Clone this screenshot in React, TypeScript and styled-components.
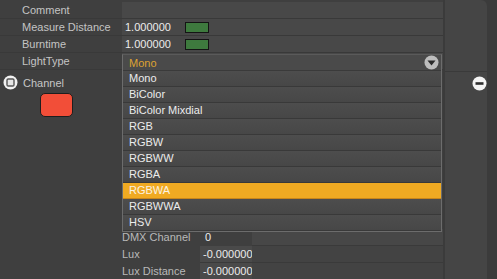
import { createGlobalStyle, styled } from 'styled-components';

const GlobalStyle = createGlobalStyle`
    html, body {
        margin: 0;
        padding: 0;
        background: #3f3f3f;
        overflow: hidden;
    }
    body {
        font-family: "Liberation Sans", Arial, sans-serif;
        font-size: 11px;
        color: #c6c6c6;
    }
`;

const Page = styled.div`
    display: flex;
    width: 497px;
    height: 279px;
    overflow: hidden;
`;

const Main = styled.div`
    position: relative;
    width: 443px;
    padding-top: 2px;
    display: flex;
    flex-direction: column;
`;

const PropRow = styled.div`
    display: grid;
    grid-template-columns: 122px 1fr;
    height: 17px;
    border-bottom: 1px solid #393939;
    box-sizing: border-box;
`;

const Label = styled.div`
    padding-left: 22px;
    line-height: 16px;
    white-space: nowrap;
    color: #c4c4c4;
`;

const Value = styled.div`
    display: flex;
    align-items: center;
    gap: 14px;
    padding-left: 3px;
    background: #484848;
    color: #ececec;
    line-height: 16px;
`;

const ColorChip = styled.span`
    width: 22px;
    height: 9px;
    background: #3e7a3e;
    border: 1px solid #141414;
`;

const ChannelSection = styled.div`
    margin-top: 4px;
    display: flex;
    flex-direction: column;
`;

const ChannelHeader = styled.div`
    display: flex;
    align-items: center;
    height: 17px;
    padding-left: 3px;
    gap: 5px;
`;

const ChannelBody = styled.div`
    display: flex;
`;

const SwatchCol = styled.div`
    width: 122px;
    flex-shrink: 0;
`;

const Swatch = styled.div<{ $color: string }>`
    margin: 2px 0 0 40px;
    width: 31px;
    height: 22px;
    border-radius: 5px;
    border: 1px solid #1e1e1e;
    background: ${p => p.$color};
`;

const SubList = styled.div`
    flex: 1;
    padding-top: 138px;
    display: flex;
    flex-direction: column;
`;

const SubRow = styled.div`
    display: grid;
    grid-template-columns: 78px 52px 1fr;
    height: 17px;
    line-height: 16px;
`;

const SubLabel = styled.div`
    color: #b9b9b9;
    white-space: nowrap;
`;

const SubValue = styled.div<{ $boxed?: boolean }>`
    padding-left: ${p => (p.$boxed ? 3 : 5)}px;
    color: #ececec;
    white-space: nowrap;
    overflow: hidden;
    background: ${p => (p.$boxed ? '#4a4a4a' : 'transparent')};
    border-bottom: 1px solid ${p => (p.$boxed ? '#3a3a3a' : 'transparent')};
`;

const SubRest = styled.div<{ $light?: boolean }>`
    background: ${p => (p.$light ? '#474747' : '#434343')};
    border-bottom: 1px solid #3a3a3a;
`;

const Dropdown = styled.div`
    position: absolute;
    left: 122px;
    top: 54px;
    width: 320px;
    border: 1px solid #6c6c6c;
    border-top-color: #5a5a5a;
    background: #4a4a4a;
    box-sizing: border-box;
`;

const DropHeader = styled.div`
    display: flex;
    align-items: center;
    justify-content: space-between;
    height: 16px;
    box-sizing: border-box;
    padding: 0 2px 0 6px;
    color: #dda232;
    border-bottom: 1px solid #3a3a3a;
`;

const Item = styled.div<{ $active?: boolean }>`
    height: 16px;
    line-height: 15px;
    padding-left: 6px;
    box-sizing: border-box;
    border-bottom: 1px solid ${p => (p.$active ? '#c9861a' : '#393939')};
    background: ${p =>
        p.$active ? '#f0aa22' : 'linear-gradient(#4d4d4d, #474747)'};
    color: ${p => (p.$active ? '#fbf3e2' : '#ececec')};
`;

const Side = styled.div`
    width: 54px;
    display: flex;
    background: #3b3b3b;
`;

const SidePanel = styled.div`
    margin-left: 2px;
    width: 42px;
    background: #454545;
    border-top-right-radius: 6px;
    display: flex;
    flex-direction: column;
`;

const SideTop = styled.div`
    height: 72px;
    border-bottom: 1px solid #3a3a3a;
    box-sizing: border-box;
`;

const SideIconRow = styled.div`
    padding: 4px 0 0 27px;
    width: 14px;
`;

const ExpandIcon = () => (
    <svg width="15" height="15" viewBox="0 0 15 15">
        <circle cx="7.5" cy="7.5" r="7" fill="#f2f2f2" />
        <rect x="4" y="4" width="7" height="7" rx="1.2" fill="#e6e6e6" stroke="#555" strokeWidth="1.4" />
    </svg>
);

const RemoveIcon = () => (
    <svg width="15" height="15" viewBox="0 0 15 15">
        <circle cx="7.5" cy="7.5" r="7" fill="#f4f4f4" />
        <rect x="3.5" y="6.2" width="8" height="2.6" fill="#2e2e2e" />
    </svg>
);

const ArrowIcon = () => (
    <svg width="15" height="15" viewBox="0 0 15 15">
        <circle cx="7.5" cy="7.5" r="7" fill="#bdbdbd" />
        <path d="M3.5 5.5 L11.5 5.5 L7.5 10.5 Z" fill="#2a2a2a" />
    </svg>
);

const lightTypes = [
    'Mono', 'BiColor', 'BiColor Mixdial', 'RGB', 'RGBW',
    'RGBWW', 'RGBA', 'RGBWA', 'RGBWWA', 'HSV',
];

const App = () => {
    const active = 'RGBWA';

    return (
        <>
            <GlobalStyle />
            <Page>
                <Main>
                    <PropRow>
                        <Label>Comment</Label>
                        <Value />
                    </PropRow>
                    <PropRow>
                        <Label>Measure Distance</Label>
                        <Value>1.000000<ColorChip /></Value>
                    </PropRow>
                    <PropRow>
                        <Label>Burntime</Label>
                        <Value>1.000000<ColorChip /></Value>
                    </PropRow>
                    <PropRow>
                        <Label>LightType</Label>
                        <Value />
                    </PropRow>

                    <ChannelSection>
                        <ChannelHeader>
                            <ExpandIcon />
                            <span>Channel</span>
                        </ChannelHeader>
                        <ChannelBody>
                            <SwatchCol>
                                <Swatch $color="#f24e38" />
                            </SwatchCol>
                            <SubList>
                                <SubRow>
                                    <SubLabel>DMX Channel</SubLabel>
                                    <SubValue>0</SubValue>
                                    <SubRest $light />
                                </SubRow>
                                <SubRow>
                                    <SubLabel>Lux</SubLabel>
                                    <SubValue $boxed>-0.000000</SubValue>
                                    <SubRest />
                                </SubRow>
                                <SubRow>
                                    <SubLabel>Lux Distance</SubLabel>
                                    <SubValue $boxed>-0.000000</SubValue>
                                    <SubRest />
                                </SubRow>
                            </SubList>
                        </ChannelBody>
                    </ChannelSection>

                    <Dropdown>
                        <DropHeader>
                            <span>Mono</span>
                            <ArrowIcon />
                        </DropHeader>
                        {lightTypes.map(t => (
                            <Item key={t} $active={t === active}>{t}</Item>
                        ))}
                    </Dropdown>
                </Main>
                <Side>
                    <SidePanel>
                        <SideTop />
                        <SideIconRow>
                            <RemoveIcon />
                        </SideIconRow>
                    </SidePanel>
                </Side>
            </Page>
        </>
    );
};

export default App;
